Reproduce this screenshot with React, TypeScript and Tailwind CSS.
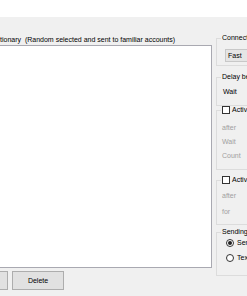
import React from "react";

function Group({
  label,
  header,
  className,
  children,
}: {
  label?: string;
  header?: React.ReactNode;
  className: string;
  children?: React.ReactNode;
}) {
  return (
    <div className={"relative border border-[#dcdcdc] " + className}>
      {label && (
        <div className="absolute -top-[5px] left-[4px] px-[1px] bg-[#f0f0f0] leading-[8px] whitespace-nowrap">
          {label}
        </div>
      )}
      {header && (
        <div className="absolute -top-[5px] left-[4px] px-[1px] bg-[#f0f0f0] flex items-center gap-[2px] whitespace-nowrap">
          {header}
        </div>
      )}
      {children}
    </div>
  );
}

function Check({ text }: { text: string }) {
  return (
    <>
      <div className="w-[8px] h-[8px] border border-[#333333] bg-white" />
      <span className="leading-[8px]">{text}</span>
    </>
  );
}

function Radio({ text, on }: { text: string; on?: boolean }) {
  return (
    <div className="flex items-center gap-[3px] h-[8px]">
      <div className="w-[8px] h-[8px] rounded-full border border-[#333333] bg-white flex items-center justify-center">
        {on && <div className="w-[4px] h-[4px] rounded-full bg-[#222222]" />}
      </div>
      <span className="leading-[8px] whitespace-nowrap">{text}</span>
    </div>
  );
}

export default function App() {
  return (
    <div
      className="w-[247px] h-[296px] overflow-hidden bg-[#f0f0f0] text-[7px] text-black flex flex-col"
      style={{ fontFamily: '"Liberation Sans", Arial, sans-serif' }}
    >
      <div className="h-[17px] bg-white shrink-0" />
      <div className="flex">
        <div className="-ml-[20px] w-[232px] shrink-0 flex flex-col">
          <div className="mt-[19px] h-[8px] leading-[8px] pl-[20px] whitespace-pre">
            {"tionary  (Random selected and sent to familiar accounts)"}
          </div>
          <div className="mt-[1px] h-[223px] bg-white border border-[#a9a9b1]" />
          <div className="mt-[3px] flex gap-[4px]">
            <div className="w-[28px] h-[19px] bg-[#e1e1e1] border border-[#adadad]" />
            <div className="w-[52px] h-[19px] bg-[#e1e1e1] border border-[#adadad] flex items-center justify-center leading-[8px]">
              Delete
            </div>
          </div>
        </div>
        <div className="ml-[4px] w-[80px] shrink-0 flex flex-col">
          <Group label="Connection speed" className="mt-[21px] h-[28px]">
            <div className="ml-[8px] mt-[10px] h-[13px] bg-[#e5e5e5] border border-[#c8c8c8] flex items-center pl-[2px] leading-[8px]">
              Fast
            </div>
          </Group>
          <Group label="Delay between messages" className="mt-[11px] h-[29px]">
            <div className="ml-[6px] mt-[10px] leading-[8px]">Wait</div>
          </Group>
          <Group header={<Check text="Active" />} className="mt-[4px] h-[60px]">
            <div className="pl-[5px] pt-[13px] flex flex-col gap-[6px] text-[#a0a0a0] leading-[8px]">
              <div>after</div>
              <div>Wait</div>
              <div>Count</div>
            </div>
          </Group>
          <Group header={<Check text="Active" />} className="mt-[10px] h-[45px]">
            <div className="pl-[5px] pt-[11px] flex flex-col gap-[8px] text-[#a0a0a0] leading-[8px]">
              <div>after</div>
              <div>for</div>
            </div>
          </Group>
          <Group label="Sending mode" className="mt-[7px] h-[44px]">
            <div className="pl-[9px] pt-[6px] flex flex-col gap-[7px]">
              <Radio text="Send" on />
              <Radio text="Text" />
            </div>
          </Group>
        </div>
      </div>
    </div>
  );
}
